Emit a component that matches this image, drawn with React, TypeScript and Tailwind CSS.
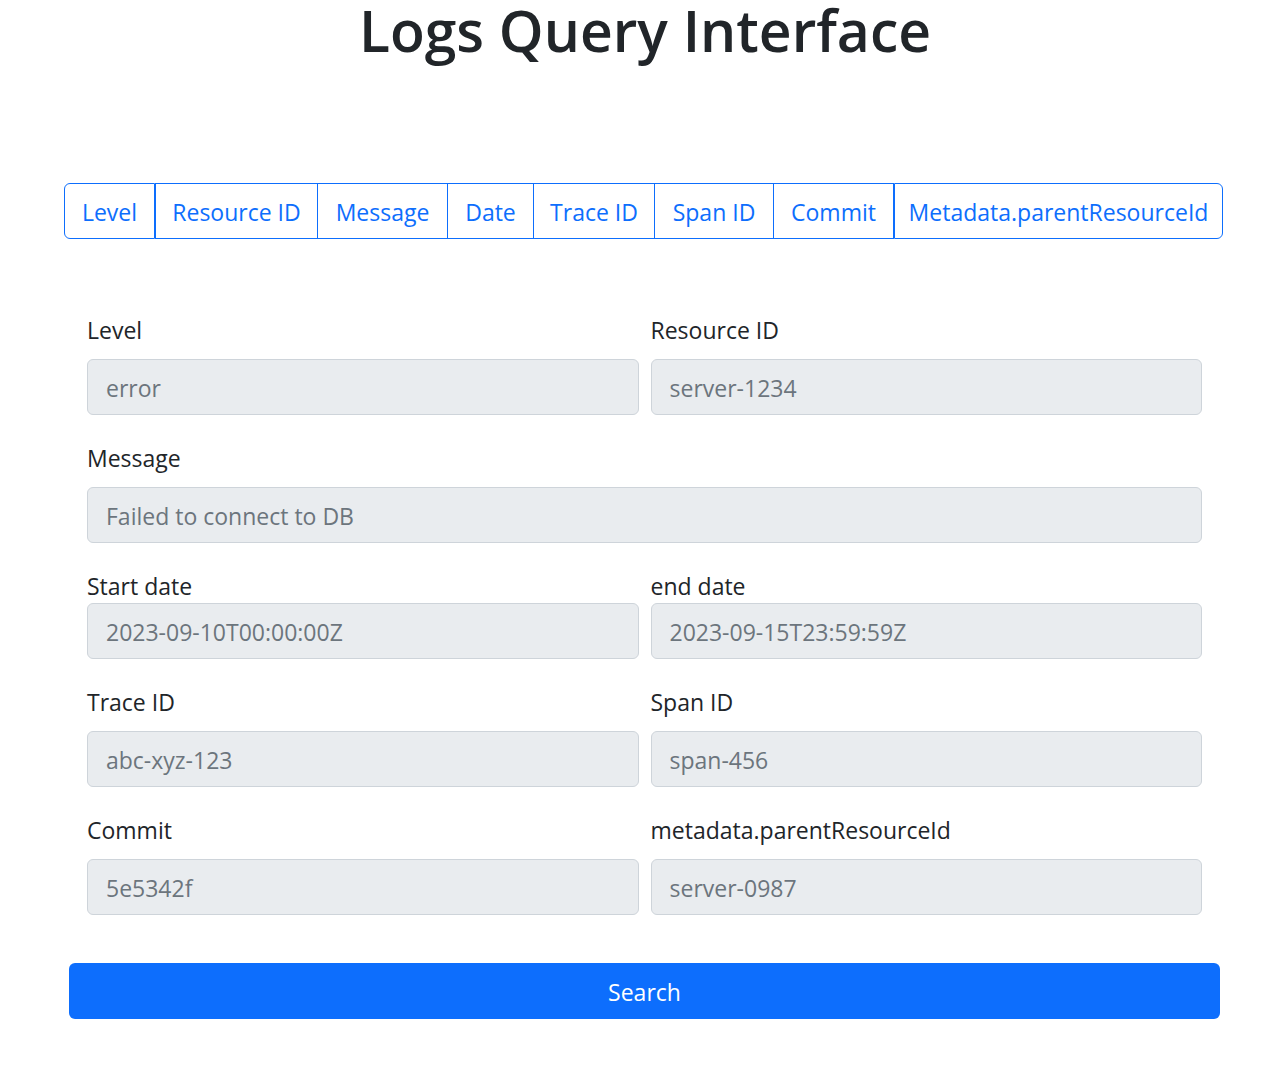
import React from "react";

const filters = [
  { name: "Level", size: "basis-[91px]" },
  { name: "Resource ID", size: "basis-[163px]" },
  { name: "Message", size: "-ml-px basis-[131px]" },
  { name: "Date", size: "-ml-px basis-[87px]" },
  { name: "Trace ID", size: "-ml-px basis-[122px]" },
  { name: "Span ID", size: "-ml-px basis-[120px]" },
  { name: "Commit", size: "-ml-px basis-[121px]" },
  { name: "Metadata.parentResourceId", size: "basis-[329px]" },
];

type FieldProps = {
  id: string;
  label: string;
  placeholder: string;
  wide?: boolean;
  tight?: boolean;
};

const fields: FieldProps[] = [
  { id: "level", label: "Level", placeholder: "error" },
  { id: "resourceId", label: "Resource ID", placeholder: "server-1234" },
  { id: "message", label: "Message", placeholder: "Failed to connect to DB", wide: true },
  { id: "startDate", label: "Start date", placeholder: "2023-09-10T00:00:00Z", tight: true },
  { id: "endDate", label: "end date", placeholder: "2023-09-15T23:59:59Z", tight: true },
  { id: "traceId", label: "Trace ID", placeholder: "abc-xyz-123" },
  { id: "spanId", label: "Span ID", placeholder: "span-456" },
  { id: "commit", label: "Commit", placeholder: "5e5342f" },
  { id: "parentResourceId", label: "metadata.parentResourceId", placeholder: "server-0987" },
];

function Field({ id, label, placeholder, wide, tight }: FieldProps) {
  return (
    <div className={wide ? "col-span-2 min-w-0" : "min-w-0"}>
      <label htmlFor={id} className={tight ? "block pb-0.5 leading-[30px]" : "mb-3 block pb-0.5 leading-[30px]"}>
        {label}
      </label>
      <input
        id={id}
        type="text"
        disabled
        placeholder={placeholder}
        className="block h-14 w-full rounded-md border border-[#ced4da] bg-[#e9ecef] px-[18px] pt-0.5 placeholder:text-[#6c757d] placeholder:opacity-100"
      />
    </div>
  );
}

export default function App() {
  return (
    <main className="bg-white pb-12 font-['Open_Sans',sans-serif] text-[23px] text-[#212529]">
      <h1 className="ml-6 text-center text-[57px] font-semibold leading-15">
        Logs Query Interface
      </h1>
      <div className="ml-16 mr-[43px] mt-[123px] flex" role="group" aria-label="Filters">
        {filters.map(({ name, size }) => (
          <button
            key={name}
            type="button"
            className={`${size} h-14 min-w-0 grow border border-[#0d6efd] pt-0.5 text-center whitespace-nowrap text-[#0d6efd] first:rounded-l-md last:rounded-r-md`}
          >
            {name}
          </button>
        ))}
      </div>
      <form className="ml-[69px] mr-[46px] mt-[76px]" onSubmit={(e) => e.preventDefault()}>
        <div className="mx-[18px] grid grid-cols-2 gap-x-3 gap-y-7">
          {fields.map((field) => (
            <Field key={field.id} {...field} />
          ))}
        </div>
        <button type="submit" className="mt-12 block h-14 w-full rounded-md bg-[#0d6efd] pt-0.5 text-white">
          Search
        </button>
      </form>
    </main>
  );
}
